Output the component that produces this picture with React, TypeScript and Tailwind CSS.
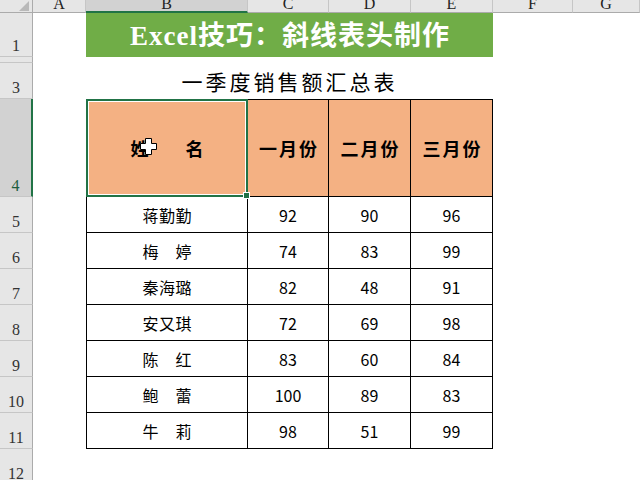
import React from "react";

const serif = "font-['Liberation_Serif','Noto_Sans_CJK_SC',serif]";
const cjk = "font-['Noto_Sans_CJK_SC','Liberation_Sans',sans-serif]";

const rows: [string, number, number, number][] = [
  ["蒋勤勤", 92, 90, 96],
  ["梅婷", 74, 83, 99],
  ["秦海璐", 82, 48, 91],
  ["安又琪", 72, 69, 98],
  ["陈红", 83, 60, 84],
  ["鲍蕾", 100, 89, 83],
  ["牛莉", 98, 51, 99],
];

const letters = ["A", "B", "C", "D", "E", "F", "G"];

function RowHead({ n, active }: { n: string; active?: boolean }) {
  return (
    <div
      className={
        active
          ? `flex items-end justify-center overflow-hidden bg-[#d2d2d2] border-b border-[#c6c6c6] border-r-2 border-r-[#217346] pb-0.5 text-[16px] leading-none text-[#1e5e3e] ${serif}`
          : `flex items-end justify-center overflow-hidden bg-[#e6e6e6] border-b border-[#c6c6c6] border-r border-r-[#ababab] pb-0.5 text-[16px] leading-none text-[#333] ${serif}`
      }
    >
      {n}
    </div>
  );
}

function NameCell({ name }: { name: string }) {
  const chars = name.split("");
  return (
    <div className="flex items-center justify-center border-l border-r border-b border-black">
      <div className={`flex w-[49px] justify-between text-[16px] leading-none text-black ${cjk}`}>
        {chars.map((c, i) => (
          <span key={i}>{c}</span>
        ))}
      </div>
    </div>
  );
}

function NumCell({ v }: { v: number }) {
  return (
    <div className={`flex items-center justify-center border-r border-b border-black text-[16px] leading-none text-black ${cjk}`}>
      {v}
    </div>
  );
}

function Cursor() {
  return (
    <svg className="absolute left-[53px] top-[38px]" width="17" height="17" viewBox="0 0 17 17">
      <polygon
        points="5.5,0.5 11.5,0.5 11.5,5.5 16.5,5.5 16.5,11.5 11.5,11.5 11.5,16.5 5.5,16.5 5.5,11.5 0.5,11.5 0.5,5.5 5.5,5.5"
        fill="#ffffff"
        stroke="#000000"
        strokeWidth="1"
      />
    </svg>
  );
}

export default function App() {
  return (
    <div className="h-[480px] w-[640px] overflow-hidden bg-white">
      <div className="grid grid-cols-[33px_53px_162px_81px_82px_82px_80px_67px] grid-rows-[13px_44px_6px_36px_98px_36px_36px_36px_36px_36px_36px_36px_36px]">
        {/* column header bar */}
        <div className="relative overflow-hidden bg-[#e6e6e6] border-r border-b border-[#ababab]">
          <div className="absolute right-[3px] bottom-[1px] h-0 w-0 border-l-[10px] border-b-[10px] border-l-transparent border-b-[#b9b9b9]" />
        </div>
        {letters.map((l) => (
          <div
            key={l}
            className={
              l === "B"
                ? `flex justify-center overflow-hidden bg-[#d2d2d2] border-r border-r-[#c6c6c6] border-b-2 border-b-[#217346] ${serif}`
                : `flex justify-center overflow-hidden bg-[#e6e6e6] border-r border-r-[#c6c6c6] border-b border-b-[#ababab] ${serif}`
            }
          >
            <span className="-mt-[4px] text-[16px] leading-none text-[#222]">{l}</span>
          </div>
        ))}

        {/* row 1: banner */}
        <RowHead n="1" />
        <div />
        <div className="col-span-4 flex items-center justify-center bg-[#70ad47]">
          <span className={`pt-[2px] pl-[1px] text-[27px] font-bold leading-none tracking-[1px] text-white ${serif}`}>
            Excel技巧：斜线表头制作
          </span>
        </div>
        <div />
        <div />

        {/* row 2 */}
        <RowHead n="2" />
        <div />
        <div className="col-span-4" />
        <div />
        <div />

        {/* row 3: title */}
        <RowHead n="3" />
        <div />
        <div className="col-span-4 flex items-center justify-center pt-[1px]">
          <span className={`text-[21px] leading-none tracking-[3px] text-black ${cjk}`}>一季度销售额汇总表</span>
        </div>
        <div />
        <div />

        {/* row 4: table header */}
        <RowHead n="4" active />
        <div />
        <div className="relative flex items-center justify-center gap-[37px] bg-[#f4b183] border-l border-t border-r border-b border-black">
          <span className={`text-[18px] font-bold leading-none text-black ${cjk}`}>姓</span>
          <span className={`text-[18px] font-bold leading-none text-black ${cjk}`}>名</span>
          <div className="absolute -left-px -top-px -right-px -bottom-px border-2 border-[#217346]">
            <div className="h-full w-full border border-white" />
          </div>
          <div className="absolute -right-[3px] -bottom-[3px] h-[7px] w-[7px] border border-white bg-[#217346]" />
          <Cursor />
        </div>
        {["一月份", "二月份", "三月份"].map((m) => (
          <div
            key={m}
            className="flex items-center justify-center bg-[#f4b183] border-t border-r border-b border-black"
          >
            <span className={`pl-[2px] text-[18px] font-bold leading-none tracking-[2px] text-black ${cjk}`}>{m}</span>
          </div>
        ))}
        <div />
        <div />

        {/* rows 5-11 */}
        {rows.map((r, i) => (
          <React.Fragment key={r[0]}>
            <RowHead n={String(i + 5)} />
            <div />
            <NameCell name={r[0]} />
            <NumCell v={r[1]} />
            <NumCell v={r[2]} />
            <NumCell v={r[3]} />
            <div />
            <div />
          </React.Fragment>
        ))}

        {/* row 12 */}
        <RowHead n="12" />
        <div />
        <div />
        <div />
        <div />
        <div />
        <div />
        <div />
      </div>
    </div>
  );
}
